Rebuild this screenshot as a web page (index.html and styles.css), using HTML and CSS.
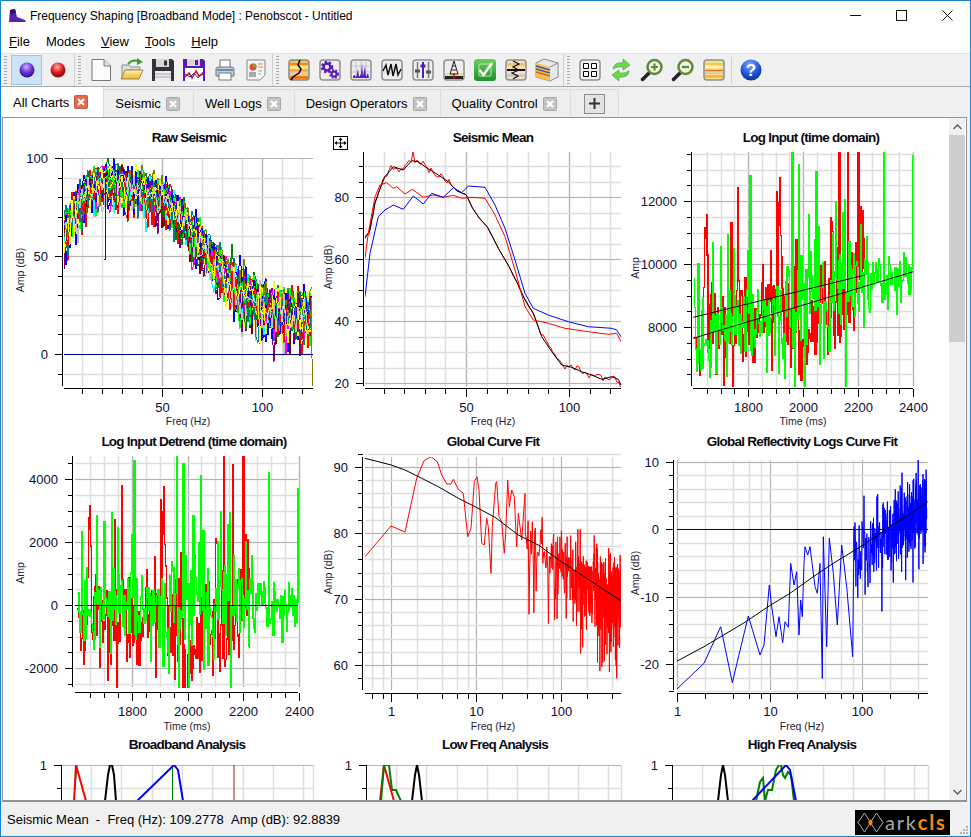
FILE: index.html
```html
<!DOCTYPE html>
<html lang="en">
<head>
  <meta charset="UTF-8">
  <title>Frequency Shaping [Broadband Mode] : Penobscot - Untitled</title>
  <link rel="stylesheet" href="styles.css">
</head>
<body>
<div class="window">
  <!--caption-->
  <div class="caption">
    <svg class="app-icon" width="17" height="13" viewBox="0 0 17 13"><polygon points="0,13 1,1 6,0 8,8 16,11 17,13" fill="#5a1fb0"/><polygon points="1,1 6,0 7,4 1,5" fill="#2a1060"/></svg>
    <span class="caption-text">Frequency Shaping [Broadband Mode] : Penobscot - Untitled</span>
    <div class="caption-btns">
      <div class="caption-btn"><svg width="11" height="11" viewBox="0 0 11 11"><path d="M0 5.5H11" stroke="#111"/></svg></div>
      <div class="caption-btn"><svg width="11" height="11" viewBox="0 0 11 11"><rect x=".5" y=".5" width="10" height="10" fill="none" stroke="#111"/></svg></div>
      <div class="caption-btn"><svg width="11" height="11" viewBox="0 0 11 11"><path d="M.5 .5L10.5 10.5M10.5 .5L.5 10.5" stroke="#111"/></svg></div>
    </div>
  </div>

  <!--menu-->
  <div class="menu">
    <span class="menu-item"><u>F</u>ile</span>
    <span class="menu-item">Modes</span>
    <span class="menu-item"><u>V</u>iew</span>
    <span class="menu-item"><u>T</u>ools</span>
    <span class="menu-item"><u>H</u>elp</span>
  </div>

  <!--toolbar-->
  <div class="toolbar">
    <div class="tool-group">
      <div class="grip"></div>
      <div class="tool active">
        <svg width="24" height="24" viewBox="0 0 24 24">
          <defs>
            <radialGradient id="ballPurple" cx=".45" cy=".3" r=".75"><stop offset="0" stop-color="#c9b4ff"/><stop offset=".5" stop-color="#6b35d8"/><stop offset="1" stop-color="#230a6a"/></radialGradient>
            <radialGradient id="ballRed" cx=".45" cy=".3" r=".75"><stop offset="0" stop-color="#ffb0b0"/><stop offset=".5" stop-color="#e01c1c"/><stop offset="1" stop-color="#6d0808"/></radialGradient>
            <radialGradient id="ballBlue" cx=".45" cy=".25" r=".8"><stop offset="0" stop-color="#7fa8ff"/><stop offset=".6" stop-color="#1f50d8"/><stop offset="1" stop-color="#0a2a90"/></radialGradient>
            <linearGradient id="checkGreen" x1="0" y1="0" x2="0" y2="1"><stop offset="0" stop-color="#6fcf5f"/><stop offset="1" stop-color="#1f8f2f"/></linearGradient>
            <linearGradient id="folderYellow" x1="0" y1="0" x2="0" y2="1"><stop offset="0" stop-color="#fff0b0"/><stop offset="1" stop-color="#e8b840"/></linearGradient>
          </defs>
          <circle cx="12" cy="12" r="7.5" fill="url(#ballPurple)"/>
        </svg>
      </div>
      <div class="tool"><svg width="24" height="24" viewBox="0 0 24 24"><circle cx="12" cy="12" r="7.5" fill="url(#ballRed)"/></svg></div>
    </div>

    <div class="tool-group">
      <div class="grip"></div>
      <div class="tool"><svg width="24" height="24" viewBox="0 0 24 24"><path d="M3 1.5H15L21.500 8V22.500H3Z" fill="#fcfcfc" stroke="#777"/><path d="M15 1.500V8H21.500" fill="#e4e4e4" stroke="#777"/></svg></div>
      <div class="tool"><svg width="24" height="24" viewBox="0 0 24 24"><path d="M2 21V7H9L11 9H20V12H6Z" fill="#d8dfe4" stroke="#8a8f90"/><path d="M1 21L5 12H23L19 21Z" fill="url(#folderYellow)" stroke="#a88a30"/><path d="M8 6Q12 1 18 3" fill="none" stroke="#3f9a2f" stroke-width="2"/><path d="M17 0L23 4L17 7Z" fill="#3f9a2f"/></svg></div>
      <div class="tool"><svg width="24" height="24" viewBox="0 0 24 24"><path d="M1 1H21L23 3V23H1Z" fill="#30343a"/><rect x="5" y="1" width="13" height="8" fill="#d8d8d8"/><rect x="13" y="2.500" width="3" height="5" fill="#30343a"/><rect x="4" y="13" width="16" height="10" fill="#ededed"/><path d="M4 16H20M4 19H20" stroke="#aaa"/></svg></div>
      <div class="tool"><svg width="24" height="24" viewBox="0 0 24 24"><path d="M1 1H21L23 3V23H1Z" fill="#5a18b8"/><rect x="5" y="1" width="13" height="7" fill="#d8d8d8"/><rect x="13" y="2" width="3" height="5" fill="#5a18b8"/><rect x="3" y="10" width="18" height="13" fill="#fff"/><path d="M3 19L7 15L10 20L14 13L17 18L21 16" fill="none" stroke="#e01010" stroke-width="1.500"/><path d="M3 16L8 19L12 15L16 20L21 14" fill="none" stroke="#1030c0"/></svg></div>
      <div class="tool"><svg width="24" height="24" viewBox="0 0 24 24"><rect x="7" y="2" width="10" height="8" fill="#fff" stroke="#777"/><path d="M3 11Q3 9 6 9H18Q21 9 21 11V18H3Z" fill="#c8ccd0" stroke="#6a7480"/><rect x="6" y="15" width="12" height="7" fill="#fff" stroke="#777"/><path d="M4 12H20" stroke="#3a80c0" stroke-width="1.500"/></svg></div>
      <div class="tool"><svg width="24" height="24" viewBox="0 0 24 24"><path d="M3 2H21V17L16 22H3Z" fill="#f4f4f0" stroke="#8a8a8a"/><circle cx="9" cy="9" r="3.500" fill="#e05030"/><path d="M9 9V5.500A3.500 3.500 0 0 1 12.500 9Z" fill="#60b040"/><path d="M14 6H19M14 9H19" stroke="#e08070"/><rect x="5" y="14" width="7" height="5" fill="#a8a8a8"/><path d="M14 13H18M14 16H17" stroke="#aaa"/></svg></div>
    </div>

    <div class="tool-group">
      <div class="grip"></div>
      <div class="tool"><svg width="24" height="24" viewBox="0 0 24 24"><rect x="2" y="2" width="20" height="20" rx="3" fill="#f7c65a" stroke="#8a8a8a" stroke-width="1.500"/><path d="M3 6H21" stroke="#f08a10" stroke-width="2"/><path d="M3 9.500H21" stroke="#fff0b0" stroke-width="2"/><path d="M3 12.500H21" stroke="#f8a840" stroke-width="2"/><path d="M3 15.500H21" stroke="#cfcfcf" stroke-width="2"/><path d="M3 19.500H21" stroke="#f06a10" stroke-width="2.500"/><path d="M13 2L11 7L14 11L12 15L6 19L4 22" fill="none" stroke="#000" stroke-width="1.500"/></svg></div>
      <div class="tool"><svg width="24" height="24" viewBox="0 0 24 24"><rect x="2" y="2" width="20" height="20" rx="3" fill="#eeeeee" stroke="#8f8f8f" stroke-width="1.500"/><circle cx="9" cy="9" r="3.400" fill="none" stroke="#5a18b8" stroke-width="2.500"/><circle cx="9" cy="9" r="5.200" fill="none" stroke="#5a18b8" stroke-width="2" stroke-dasharray="2.400 1.900"/><circle cx="16" cy="16" r="2.500" fill="none" stroke="#5a18b8" stroke-width="2"/><circle cx="16" cy="16" r="4" fill="none" stroke="#5a18b8" stroke-width="1.800" stroke-dasharray="1.800 1.500"/></svg></div>
      <div class="tool"><svg width="24" height="24" viewBox="0 0 24 24"><rect x="2" y="2" width="20" height="20" rx="3" fill="#eeeeee" stroke="#8f8f8f" stroke-width="1.500"/><path d="M7 3V21M12 3V21M17 3V21M3 8H21M3 14H21" stroke="#c4c4d4"/><path d="M4 20V18L6 17L7 20L9 11L10 19L12 16L13 5L14 18L16 8L17 19L19 15L20 20Z" fill="#5a18b8"/></svg></div>
      <div class="tool"><svg width="24" height="24" viewBox="0 0 24 24"><rect x="2" y="2" width="20" height="20" rx="3" fill="#eeeeee" stroke="#8f8f8f" stroke-width="1.500"/><path d="M3 13L6 7L8 17L11 6L13 18L16 6L18 17L21 11" fill="none" stroke="#111" stroke-width="1.500"/></svg></div>
      <div class="tool"><svg width="24" height="24" viewBox="0 0 24 24"><rect x="2" y="2" width="20" height="20" rx="3" fill="#eeeeee" stroke="#8f8f8f" stroke-width="1.500"/><path d="M6.500 4V20M17.500 4V20" stroke="#777" stroke-width="1.500"/><path d="M12 4V20" stroke="#5a18b8" stroke-width="2"/><path d="M4 13H9M15 14H20" stroke="#555" stroke-width="3"/><path d="M9.500 8H14.500" stroke="#5a18b8" stroke-width="3"/></svg></div>
      <div class="tool"><svg width="24" height="24" viewBox="0 0 24 24"><rect x="2" y="2" width="20" height="20" rx="3" fill="#eeeeee" stroke="#8f8f8f" stroke-width="1.500"/><rect x="3" y="15" width="18" height="3" fill="#f2dc90"/><rect x="3" y="18" width="18" height="3" fill="#222"/><path d="M12 3L8 16H16ZM9.500 12H14.500M10.500 8H13.500" fill="none" stroke="#222"/><path d="M12 15V21" stroke="#e01010" stroke-width="1.500"/></svg></div>
      <div class="tool"><svg width="24" height="24" viewBox="0 0 24 24"><rect x="1" y="1" width="22" height="22" rx="3" fill="url(#checkGreen)"/><rect x="6" y="6" width="12" height="12" rx="1" fill="none" stroke="#b8e8b0"/><path d="M6.500 12L10.500 17L19 5" fill="none" stroke="#fff" stroke-width="2.500"/></svg></div>
      <div class="tool"><svg width="24" height="24" viewBox="0 0 24 24"><rect x="2" y="2" width="20" height="20" rx="3" fill="#f6e2b8" stroke="#8f8f8f" stroke-width="1.500"/><rect x="3" y="5" width="18" height="3" fill="#f8c070"/><rect x="3" y="16" width="18" height="3" fill="#c8c8d8"/><path d="M3 12H21" stroke="#111" stroke-width="2"/><path d="M9 3L15 6L9 9L15 12L8 15L14 18L9 21" fill="none" stroke="#111" stroke-width="1.200"/></svg></div>
      <div class="tool"><svg width="24" height="24" viewBox="0 0 24 24"><path d="M1 5L9 1L23 5V19L15 23L1 19Z" fill="#e8e8e8" stroke="#888"/><path d="M1 5L15 9V23L1 19Z" fill="#f8c050"/><path d="M1 8L15 12M1 11L15 15" stroke="#4060a0" stroke-width="1.500"/><path d="M1 14L15 18" stroke="#e06010" stroke-width="1.500"/><path d="M15 9L23 5" stroke="#888"/></svg></div>
    </div>

    <div class="tool-group last">
      <div class="grip"></div>
      <div class="tool"><svg width="24" height="24" viewBox="0 0 24 24"><rect x="2" y="2" width="20" height="20" rx="3" fill="#f4f4f4" stroke="#8f8f8f" stroke-width="1.500"/><path d="M5.500 5.500H10.500V10.500H5.500ZM13.500 5.500H18.500V10.500H13.500ZM5.500 13.500H10.500V18.500H5.500ZM13.500 13.500H18.500V18.500H13.500Z" fill="#fff" stroke="#000"/></svg></div>
      <div class="tool"><svg width="24" height="24" viewBox="0 0 24 24"><path d="M4 11Q5 4 14 5V1L21 7L14 12V9Q8 8 4 11Z" fill="#6ed84a" stroke="#3aa830" stroke-width=".7"/><path d="M20 13Q19 20 10 19V23L3 17L10 12V15Q16 16 20 13Z" fill="#6ed84a" stroke="#3aa830" stroke-width=".7"/></svg></div>
      <div class="tool"><svg width="24" height="24" viewBox="0 0 24 24"><path d="M9 15L2.500 21.500" stroke="#222" stroke-width="3.500" stroke-linecap="round"/><circle cx="14.500" cy="9" r="7" fill="#f0f4e4" stroke="#5f8a3a" stroke-width="2.500"/><path d="M11 9H18M14.500 5.500V12.500" stroke="#5f8a3a" stroke-width="2.200"/></svg></div>
      <div class="tool"><svg width="24" height="24" viewBox="0 0 24 24"><path d="M9 15L2.500 21.500" stroke="#222" stroke-width="3.500" stroke-linecap="round"/><circle cx="14.500" cy="9" r="7" fill="#f0f4e4" stroke="#5f8a3a" stroke-width="2.500"/><path d="M11 9H18" stroke="#5f8a3a" stroke-width="2.200"/></svg></div>
      <div class="tool"><svg width="24" height="24" viewBox="0 0 24 24"><rect x="2" y="2" width="20" height="20" rx="3" fill="#fbe08a" stroke="#8f8f8f" stroke-width="1.500"/><path d="M3 6H21" stroke="#f8c848" stroke-width="2"/><path d="M3 9H21" stroke="#fff4c8" stroke-width="2"/><path d="M3 12.500H21" stroke="#f07010" stroke-width="1.500"/><path d="M3 15H21" stroke="#c8c8c8" stroke-width="1.500"/><path d="M3 18.500H21" stroke="#f8b030" stroke-width="2.500"/></svg></div>
      <div class="tool-sep"></div>
      <div class="tool"><svg width="24" height="24" viewBox="0 0 24 24"><circle cx="12" cy="12" r="10.500" fill="url(#ballBlue)"/><text class="help-mark" x="12" y="18" text-anchor="middle">?</text></svg></div>
    </div>
  </div>

  <!--tabs-->
  <div class="tabs">
    <div class="tab current">All Charts <svg class="tab-close" width="14" height="14" viewBox="0 0 14 14"><rect x=".5" y=".5" width="13" height="13" rx="1" fill="#e8694a" stroke="#c8583a"/><path d="M4 4L10 10M10 4L4 10" stroke="#fff" stroke-width="2"/></svg></div>
    <div class="tab">Seismic <svg class="tab-close" width="14" height="14" viewBox="0 0 14 14"><rect x=".5" y=".5" width="13" height="13" rx="1" fill="#c4c4c4" stroke="#a8a8a8"/><path d="M4 4L10 10M10 4L4 10" stroke="#fff" stroke-width="2"/></svg></div>
    <div class="tab">Well Logs <svg class="tab-close" width="14" height="14" viewBox="0 0 14 14"><rect x=".5" y=".5" width="13" height="13" rx="1" fill="#c4c4c4" stroke="#a8a8a8"/><path d="M4 4L10 10M10 4L4 10" stroke="#fff" stroke-width="2"/></svg></div>
    <div class="tab">Design Operators <svg class="tab-close" width="14" height="14" viewBox="0 0 14 14"><rect x=".5" y=".5" width="13" height="13" rx="1" fill="#c4c4c4" stroke="#a8a8a8"/><path d="M4 4L10 10M10 4L4 10" stroke="#fff" stroke-width="2"/></svg></div>
    <div class="tab">Quality Control <svg class="tab-close" width="14" height="14" viewBox="0 0 14 14"><rect x=".5" y=".5" width="13" height="13" rx="1" fill="#c4c4c4" stroke="#a8a8a8"/><path d="M4 4L10 10M10 4L4 10" stroke="#fff" stroke-width="2"/></svg></div>
    <div class="tab add-tab"><div class="add-btn"><svg width="11" height="11" viewBox="0 0 11 11"><path d="M5.500 0V11M0 5.500H11" stroke="#333" stroke-width="2"/></svg></div></div>
  </div>

  <!--charts-->
  <div class="panel">
    <div class="charts" id="charts"></div>
    <div class="scrollbar">
      <div class="scroll-btn"><svg width="9" height="6" viewBox="0 0 9 6"><path d="M.5 5L4.500 1L8.500 5" fill="none" stroke="#606060" stroke-width="1.500"/></svg></div>
      <div class="scroll-thumb"></div>
      <div class="scroll-track"></div>
      <div class="scroll-btn"><svg width="9" height="6" viewBox="0 0 9 6"><path d="M.5 1L4.500 5L8.500 1" fill="none" stroke="#606060" stroke-width="1.500"/></svg></div>
    </div>
  </div>

  <!--status bar-->
  <div class="status">
    <span class="status-text">Seismic Mean &nbsp;-&nbsp; Freq (Hz): 109.2778 &nbsp;Amp (dB): 92.8839</span>
    <div class="logo">
      <svg width="27" height="21" viewBox="0 0 27 21"><path d="M1 10.500L7.500 1L13.500 10.500L7.500 20ZM13.500 10.500L19.500 1L26 10.500L19.500 20Z" fill="none" stroke="#b0b0b0"/><path d="M13.500 7L16 10.500L13.500 14L11 10.500Z" fill="#f58a0a"/></svg>
      <span class="logo-text">ark<b>cls</b></span>
    </div>
    <svg class="size-grip" width="10" height="10" viewBox="0 0 10 10"><path d="M7 1h2v2h-2zM4 4h2v2h-2zM7 4h2v2h-2zM1 7h2v2h-2zM4 7h2v2h-2zM7 7h2v2h-2z" fill="#b4b4b4"/></svg>
  </div>
</div>
<script src="charts.js"></script>
</body>
</html>
```

FILE: styles.css
```css
* {
  margin: 0;
  padding: 0;
  box-sizing: border-box;
}

body {
  font-family: "Liberation Sans", Arial, sans-serif;
  color: #000;
  background-color: #f0f0f0;
}

.window {
  width: 971px;
  height: 837px;
  display: flex;
  flex-direction: column;
  border: 1px solid #1a80d0;
  overflow: hidden;
}

/*标题栏*/
.caption {
  height: 29px;
  flex: none;
  display: flex;
  align-items: center;
  background-color: #fff;
}

.app-icon {
  margin-left: 8px;
  margin-right: 4px;
}

.caption-text {
  font-size: 12px;
  letter-spacing: -0.03px;
  flex: 1;
}

.caption-btns {
  display: flex;
}

.caption-btn {
  width: 46px;
  height: 29px;
  display: flex;
  align-items: center;
  justify-content: center;
}

/*菜单*/
.menu {
  height: 23px;
  flex: none;
  display: flex;
  align-items: center;
  gap: 16px;
  padding-left: 8px;
  font-size: 13px;
  background-color: #fff;
}

/*工具栏*/
.toolbar {
  height: 34px;
  flex: none;
  display: flex;
  align-items: center;
  background-color: #f0f0f0;
  border-top: 1px solid #e3e3e3;
  border-bottom: 1px solid #a8a8a8;
}

.tool-group {
  height: 32px;
  display: flex;
  align-items: center;
  padding: 0 1px 0 3px;
  border-right: 1px solid #d0d0d0;
}

.tool-group.last {
  border-right: 0;
}

.grip {
  width: 3px;
  height: 28px;
  margin-right: 4px;
  background: repeating-linear-gradient(to bottom, #a8a8a8 0, #a8a8a8 1px, transparent 1px, transparent 3px);
}

.tool {
  width: 31px;
  height: 30px;
  display: flex;
  align-items: center;
  justify-content: center;
  border: 1px solid transparent;
}

.tool.active {
  background-color: #cce4f7;
  border-color: #99c8ec;
}

.tool-sep {
  width: 1px;
  height: 26px;
  margin: 0 3px 0 2px;
  background-color: #d0d0d0;
}

.help-mark {
  font-size: 17px;
  font-weight: bold;
  fill: #fff;
}

/*标签页*/
.tabs {
  height: 30px;
  flex: none;
  display: flex;
  align-items: flex-end;
  background-color: #f0f0f0;
  font-size: 13px;
}

.tab {
  height: 28px;
  display: flex;
  align-items: center;
  gap: 5px;
  padding: 0 13px 0 11px;
  background-color: #eeeeee;
  border-top: 1px solid #dcdcdc;
  border-right: 1px solid #dcdcdc;
  white-space: nowrap;
}

.tab.current {
  height: 30px;
  padding: 0 15px 0 12px;
  background-color: #fff;
  border-top: 0;
}

.add-tab {
  width: 48px;
  justify-content: center;
  padding: 0;
}

.add-btn {
  width: 21px;
  height: 20px;
  display: flex;
  align-items: center;
  justify-content: center;
  background-color: #e4e4e4;
  border: 1px solid #8c8c8c;
}

/*图表区域*/
.panel {
  height: 685px;
  flex: none;
  display: flex;
  margin: 0 3px 0 1px;
  background-color: #fff;
  border: 1px solid #8e9498;
  border-width: 1px 1px 2px 1px;
}

.charts {
  flex: 1;
  padding: 6px 0 0 5px;
  display: grid;
  grid-template-columns: 314px 308px 319px;
  grid-template-rows: 304px 303px 70px;
  overflow: hidden;
}

.chart {
  display: block;
  overflow: visible;
}

.chart .grid-minor {
  stroke: #dedede;
  stroke-width: 1.500px;
}

.chart .grid-major {
  stroke: #b4b4b4;
  stroke-width: 1.200px;
}

.chart .axis {
  stroke: #000;
  shape-rendering: crispEdges;
}

.chart .series {
  fill: none;
}

.chart .aliased {
  shape-rendering: crispEdges;
}

.chart-title {
  font-size: 13.500px;
  font-weight: bold;
  letter-spacing: -0.75px;
  text-anchor: middle;
  fill: #0a0a14;
}

.tick-label {
  font-size: 13px;
  fill: #0c0c34;
}

.axis-title {
  font-size: 10.500px;
  text-anchor: middle;
  fill: #1c1c34;
}

/*滚动条*/
.scrollbar {
  width: 16px;
  flex: none;
  margin-right: 1px;
  display: flex;
  flex-direction: column;
  background-color: #f0f0f0;
}

.scroll-btn {
  height: 17px;
  flex: none;
  display: flex;
  align-items: center;
  justify-content: center;
}

.scroll-thumb {
  height: 207px;
  flex: none;
  background-color: #cdcdcd;
}

.scroll-track {
  flex: 1;
}

/*状态栏*/
.status {
  flex: 1;
  min-height: 0;
  position: relative;
  display: flex;
  align-items: center;
  justify-content: space-between;
  padding: 0 20px 0 6px;
  font-size: 13px;
  background-color: #f0f0f0;
}

.logo {
  width: 95px;
  height: 25px;
  margin-top: 6px;
  display: flex;
  align-items: center;
  gap: 1px;
  padding-left: 2px;
  background-color: #000;
}

.logo-text {
  font-family: Lato, sans-serif;
  font-size: 20px;
  letter-spacing: 1.800px;
  color: #a8a8a8;
}

.logo-text b {
  font-weight: bold;
  color: #f58a0a;
}

.size-grip {
  position: absolute;
  right: 1px;
  bottom: 1px;
}
```

FILE: charts.js
```js
// 可重复的随机数
var seed = 20231;
function rand() {
  seed = (seed + 0x6D2B79F5) | 0;
  var t = Math.imul(seed ^ (seed >>> 15), 1 | seed);
  t = (t + Math.imul(t ^ (t >>> 7), 61 | t)) ^ t;
  return ((t ^ (t >>> 14)) >>> 0) / 4294967296;
}

function gauss() {
  return (rand() + rand() + rand() + rand() - 2) * 1.7;
}

function linear(v0, p0, k) {
  return function (v) {
    return p0 + (v - v0) * k;
  };
}

function logScale(p1, k) {
  return function (v) {
    return p1 + Math.log10(v) * k;
  };
}

function range(from, to, step) {
  var out = [];
  for (var v = from; v <= to + 1e-6; v += step) {
    out.push(Math.round(v * 100) / 100);
  }
  return out;
}

// 折线插值
function interp(pts, x) {
  if (x <= pts[0][0]) return pts[0][1];
  for (var i = 1; i < pts.length; i++) {
    if (x <= pts[i][0]) {
      var a = pts[i - 1], b = pts[i];
      return a[1] + (b[1] - a[1]) * (x - a[0]) / (b[0] - a[0]);
    }
  }
  return pts[pts.length - 1][1];
}

// 从截图放大3倍后量出来的点
function traced(ox, oy, pts) {
  return pts.map(function (p) {
    return [ox + p[0] / 3, oy + p[1] / 3];
  });
}

// 阶梯线, 数据点之间走直角
function stepped(pts) {
  var out = [];
  pts.forEach(function (p, i) {
    if (i > 0) out.push([p[0], pts[i - 1][1]]);
    out.push(p);
  });
  return out;
}

function line(x1, y1, x2, y2, cls) {
  return '<line x1="' + x1 + '" y1="' + y1 + '" x2="' + x2 + '" y2="' + y2 + '" class="' + cls + '"/>';
}

function label(text, x, y, cls, extra) {
  return '<text x="' + x + '" y="' + y + '" class="' + cls + '" ' + (extra || '') + '>' + text + '</text>';
}

function polyline(s) {
  var pts = s.points.map(function (p) {
    return p[0].toFixed(1) + ',' + p[1].toFixed(1);
  }).join(' ');
  return '<polyline class="series' + (s.aliased ? ' aliased' : '') + '" points="' + pts + '" stroke="' + s.color + '" stroke-width="' + (s.width || 1) + '"/>';
}

function px(v) {
  return Math.round(v) + 0.5;
}

function drawChart(c) {
  var p = c.plot, html = '';
  var w = c.size[0], h = c.size[1];
  html += '<svg class="chart" width="' + w + '" height="' + h + '" viewBox="' + c.origin[0] + ' ' + c.origin[1] + ' ' + w + ' ' + h + '">';

  // 网格
  c.x.minor.concat(c.x.major).forEach(function (v, i) {
    var x = px(c.x.scale(v));
    var major = i >= c.x.minor.length;
    html += line(x, p.t, x, p.b, major ? 'grid-major' : 'grid-minor');
  });
  c.y.minor.concat(c.y.major).forEach(function (v, i) {
    var y = px(c.y.scale(v));
    var major = i >= c.y.minor.length;
    html += line(p.l, y, p.r, y, major ? 'grid-major' : 'grid-minor');
  });

  // 曲线 (裁剪到绘图区)
  html += '<svg x="' + p.l + '" y="' + p.t + '" width="' + (p.r - p.l + 1) + '" height="' + (p.b - p.t + 1) + '" viewBox="' + p.l + ' ' + p.t + ' ' + (p.r - p.l + 1) + ' ' + (p.b - p.t + 1) + '">';
  c.series.forEach(function (s) {
    html += polyline(s);
  });
  html += '</svg>';

  // 坐标轴
  var ax = c.yAxisAt + 0.5, ay = c.xAxisAt + 0.5;
  html += line(ax, p.t, ax, p.b, 'axis');
  c.y.minor.forEach(function (v) {
    var y = px(c.y.scale(v));
    html += line(ax - 5, y, ax, y, 'axis');
  });
  c.y.major.forEach(function (v) {
    var y = px(c.y.scale(v));
    html += line(ax - 8, y, ax, y, 'axis');
    html += label(v, c.yAxisAt - 14, y + 4.5, 'tick-label', 'text-anchor="end"');
  });

  if (c.xTitle) {
    html += line(p.l, ay, p.r, ay, 'axis');
    c.x.minor.forEach(function (v) {
      var x = px(c.x.scale(v));
      html += line(x, ay, x, ay + 5, 'axis');
    });
    c.x.major.forEach(function (v) {
      var x = px(c.x.scale(v));
      html += line(x, ay, x, ay + 8, 'axis');
      html += label(v, x, c.xLabelY, 'tick-label', 'text-anchor="middle"');
    });
    html += label(c.xTitle, c.xTitleAt[0], c.xTitleAt[1], 'axis-title');
    var t = c.yTitleAt;
    html += label(c.yTitle, t[0], t[1], 'axis-title', 'transform="rotate(-90 ' + t[0] + ' ' + t[1] + ')"');
  }

  html += label(c.title, c.titleAt[0], c.titleAt[1], 'chart-title');
  html += c.overlay || '';
  html += '</svg>';
  return html;
}

/* ---------- Raw Seismic ---------- */
var rawX = linear(50, 162, 2);
var rawY = linear(0, 354, -1.96);
var rawMean = [[1, 64], [5, 74], [10, 81], [15, 87], [20, 89], [25, 90], [30, 89], [40, 86], [50, 82], [60, 72], [70, 58], [75, 51], [80, 44], [90, 33], [100, 26], [110, 24], [125, 21]];
var rawColors = ['#ff0000', '#00ff00', '#0000ff', '#00ffff', '#ff00ff', '#ffff00', '#800000', '#00ff00', '#008000', '#0000ff', '#808000', '#800080', '#ff0000', '#008080', '#ffff00', '#c0c0c0'];
var rawSeries = [];
for (var t = 0; t < 48; t++) {
  var pts = [], shift = gauss() * 2.2;
  for (var hz = 1; hz <= 125.5; hz += 1) {
    var spread = hz < 85 ? 3.4 : 5;
    var v = interp(rawMean, hz) + shift + gauss() * spread - Math.pow(rand(), 7) * 16;
    pts.push([rawX(hz), rawY(Math.min(v, 100))]);
  }
  rawSeries.push({points: pts, color: rawColors[t % rawColors.length], aliased: true});
}
// 20Hz处的尖刺, 最右端的下冲
rawSeries.push({points: [[105, 178], [105, 260], [106, 180]], color: '#800000', aliased: true});
rawSeries.push({points: [[311, 300], [312.500, 386]], color: '#808000', aliased: true});
rawSeries.push({points: [[64, 354], [313, 354]], color: '#000080', aliased: true});

/* ---------- Seismic Mean ---------- */
var meanBlack = traced(325, 120, [[120, 355], [135, 330], [150, 250], [165, 205], [180, 170], [205, 140], [235, 150], [260, 122], [280, 125], [300, 140], [340, 165], [370, 185], [395, 212], [424, 225], [440, 260], [460, 290], [490, 325], [520, 385], [550, 435], [575, 485], [600, 540], [625, 580], [650, 650], [680, 695], [710, 735], [740, 742], [770, 755], [800, 765], [830, 778], [860, 770], [880, 778], [888, 795]]);
var meanRed = traced(325, 120, [[120, 415], [130, 340], [150, 230], [165, 195], [185, 188], [205, 205], [215, 200], [240, 222], [262, 208], [295, 232], [325, 225], [355, 232], [385, 226], [410, 235], [440, 232], [480, 235], [510, 285], [540, 350], [570, 450], [600, 560], [625, 600], [670, 610], [720, 625], [790, 635], [850, 643], [875, 640], [888, 665]]);
var meanBlue = traced(325, 120, [[120, 530], [135, 400], [160, 290], [180, 270], [205, 255], [235, 268], [265, 228], [295, 252], [320, 220], [355, 232], [385, 203], [410, 218], [430, 198], [480, 202], [510, 255], [540, 325], [570, 420], [600, 520], [625, 565], [670, 585], [730, 605], [790, 620], [860, 625], [875, 630], [888, 650]]);
var meanNoisy = [];
for (var mx = 365; mx <= 621; mx += 2) {
  var jitter = (mx < 450 || mx > 540) ? 4 : 1;
  var my = interp(meanBlack, mx) + (rand() - 0.5) * jitter * 2;
  if (mx === 413) my = 152;
  meanNoisy.push([mx, my]);
}
var moveIcon = '<rect x="333.500" y="136.500" width="14" height="13" fill="#fff" stroke="#000"/>' +
  '<path d="M340.500 138V148M335 143H346" stroke="#000" fill="none"/>' +
  '<path d="M340.500 137.500L338.500 140H342.500ZM340.500 148.500L338.500 146H342.500ZM334.500 143L337 141V145ZM346.500 143L344 141V145Z" fill="#000"/>';

/* ---------- Log Input / Detrend ---------- */
function bump(t, center, width, height) {
  var d = (t - center) / width;
  return height * Math.exp(-d * d);
}

var redLog = [], greenLog = [];
function lowerTrend(t) {
  return 7650 + (t - 1600) * 2.625;
}
function upperTrend(t) {
  return 8300 + (t - 1600) * 2.16;
}
for (var ms = 1603; ms <= 2400; ms += 3) {
  // 中段振幅大, 2230以后变小
  var env = 0.8 + bump(ms, 2030, 90, 0.7) - (ms > 2230 ? 0.25 : 0);
  var spike = rand() < 0.14 ? gauss() * 1500 : 0;
  greenLog.push([ms, lowerTrend(ms) + (gauss() * 780 + spike) * env + (rand() < 0.045 ? 2200 + rand() * 2200 : 0)]);
  if (ms <= 2225) {
    var hot = bump(ms, 1645, 7, 3400) + bump(ms, 1912, 16, 2600) + bump(ms, 2212, 10, 2000) - bump(ms, 2020, 14, 1500) - bump(ms, 1985, 10, 800);
    redLog.push([ms, upperTrend(ms) - 600 + gauss() * 950 + hot + (rand() < 0.07 ? 2000 + rand() * 2400 : 0)]);
  }
}

var logX = linear(1800, 748, 0.275), logY = linear(8000, 327, -0.0315);
function logPoints(data) {
  return stepped(data.map(function (d) {
    return [logX(d[0]), logY(d[1])];
  }));
}

var trendX = linear(1800, 132, 0.2775), trendY = linear(0, 605, -0.0315);
function detrendPoints(data, trend) {
  return stepped(data.map(function (d) {
    var fade = d[0] < 1615 ? (d[0] - 1600) / 15 : 1;
    return [trendX(d[0]), trendY((d[1] - trend(d[0])) * fade)];
  }));
}

/* ---------- 频谱曲线拟合 ---------- */
function noisySpectrum(start, end, fit, scale, up, down) {
  // 频率线性采样, 在对数轴上越往右越密
  var out = [];
  for (var f = start; f <= end; f += 1) {
    var x = scale(f);
    var spread = 0.8 + Math.min(f / 150, 1) * 0.5;
    var y = interp(fit, x) + gauss() * up * spread;
    if (rand() < 0.22) y += rand() * down;
    out.push([x, y]);
  }
  return out;
}

var curveX = logScale(391, 85);
var curveFit = traced(325, 430, [[120, 85], [199, 105], [240, 120], [290, 145], [340, 170], [400, 205], [454, 232], [510, 262], [580, 315], [640, 345], [709, 395], [770, 435], [830, 475], [888, 512]]);
var curveLow = traced(325, 430, [[120, 380], [198, 288], [240, 306], [262, 205], [275, 145], [297, 92], [318, 80], [337, 95], [350, 135], [365, 162], [378, 162], [385, 148], [400, 178], [415, 190], [420, 240], [428, 320], [438, 295], [448, 155], [456, 140], [462, 180], [470, 340], [478, 345], [485, 265], [490, 290], [498, 430], [502, 290], [512, 160], [515, 155], [522, 260], [530, 275], [538, 370], [542, 310], [548, 150], [553, 230], [560, 180], [568, 200], [575, 350], [580, 250], [590, 330], [600, 190]]);
var curveRed = curveLow.concat(noisySpectrum(38, 500, curveFit, curveX, 15, 60));

var reflX = logScale(677, 92.5);
var reflFit = traced(630, 430, [[140, 694], [222, 650], [340, 580], [422, 525], [480, 490], [550, 440], [610, 400], [700, 345], [780, 290], [850, 245], [893, 215]]);
var reflLow = traced(630, 430, [[140, 778], [222, 700], [272, 590], [307, 758], [355, 558], [390, 675], [402, 645], [418, 465], [425, 530], [438, 620], [447, 560], [458, 638], [465, 575], [475, 592], [482, 400], [492, 465], [500, 425], [507, 615], [512, 510], [517, 560], [522, 400], [525, 350], [533, 375], [540, 350], [555, 470], [562, 490], [570, 400], [577, 745], [580, 320], [590, 650], [598, 325], [610, 430], [622, 585], [635, 345], [650, 470], [668, 680], [672, 290]]);
var reflBlue = reflLow.concat(noisySpectrum(82, 500, reflFit, reflX, 15, 36));

var logTicks = [0.6, 0.8, 2, 4, 6, 8, 20, 40, 60, 80, 200, 400];

var charts = [
  {
    title: 'Raw Seismic', titleAt: [189, 142], origin: [8, 124], size: [314, 304],
    plot: {l: 64, r: 313, t: 158, b: 386}, yAxisAt: 62, xAxisAt: 388,
    x: {scale: rawX, major: [50, 100], minor: range(10, 120, 10)},
    y: {scale: rawY, major: [0, 50, 100], minor: range(-10, 90, 10)},
    xLabelY: 412, xTitle: 'Freq (Hz)', xTitleAt: [188, 425], yTitle: 'Amp (dB)', yTitleAt: [24, 270],
    series: rawSeries
  },
  {
    title: 'Seismic Mean', titleAt: [493, 142], origin: [322, 124], size: [308, 304],
    plot: {l: 365, r: 621, t: 152, b: 386}, yAxisAt: 363, xAxisAt: 388,
    x: {scale: linear(50, 466, 2.06), major: [50, 100], minor: range(10, 120, 10)},
    y: {scale: linear(80, 197, -3.1), major: [20, 40, 60, 80], minor: range(20, 90, 5)},
    xLabelY: 412, xTitle: 'Freq (Hz)', xTitleAt: [493, 425], yTitle: 'Amp (dB)', yTitleAt: [332, 267],
    overlay: moveIcon,
    series: [
      {points: meanNoisy, color: '#ff0000'},
      {points: meanBlack, color: '#000000'},
      {points: meanRed, color: '#ff0000'},
      {points: meanBlue, color: '#0000ff'}
    ]
  },
  {
    title: 'Log Input (time domain)', titleAt: [811, 142], origin: [630, 124], size: [319, 304],
    plot: {l: 693, r: 913, t: 152, b: 386}, yAxisAt: 691, xAxisAt: 388,
    x: {scale: logX, major: [1800, 2000, 2200, 2400], minor: range(1650, 2400, 50)},
    y: {scale: logY, major: [8000, 10000, 12000], minor: range(6500, 13500, 500)},
    xLabelY: 412, xTitle: 'Time (ms)', xTitleAt: [803, 425], yTitle: 'Amp', yTitleAt: [639, 268],
    series: [
      {points: logPoints(redLog), color: '#ff0000', aliased: true, width: 1.4},
      {points: logPoints(greenLog), color: '#00ff00', aliased: true, width: 1.4},
      {points: traced(630, 120, [[190, 655], [850, 455]]), color: '#000000'},
      {points: traced(630, 120, [[190, 592], [705, 465]]), color: '#000000'}
    ]
  },
  {
    title: 'Log Input Detrend (time domain)', titleAt: [194, 446], origin: [8, 428], size: [314, 303],
    plot: {l: 75, r: 298, t: 456, b: 687}, yAxisAt: 72, xAxisAt: 692,
    x: {scale: trendX, major: [1800, 2000, 2200, 2400], minor: range(1650, 2400, 50)},
    y: {scale: trendY, major: [-2000, 0, 2000, 4000], minor: range(-2500, 4500, 500)},
    xLabelY: 716, xTitle: 'Time (ms)', xTitleAt: [187, 730], yTitle: 'Amp', yTitleAt: [24, 573],
    series: [
      {points: detrendPoints(redLog, upperTrend), color: '#ff0000', aliased: true, width: 1.4},
      {points: detrendPoints(greenLog, lowerTrend), color: '#00ff00', aliased: true, width: 1.4},
      {points: [[75, 605], [298, 605]], color: '#000080', aliased: true}
    ]
  },
  {
    title: 'Global Curve Fit', titleAt: [493, 446], origin: [322, 428], size: [308, 303],
    plot: {l: 365, r: 621, t: 457, b: 690}, yAxisAt: 362, xAxisAt: 693,
    x: {scale: curveX, major: [1, 10, 100], minor: logTicks},
    y: {scale: linear(90, 467, -6.6), major: [60, 70, 80, 90], minor: range(58, 92, 2)},
    xLabelY: 716, xTitle: 'Freq (Hz)', xTitleAt: [493, 730], yTitle: 'Amp (dB)', yTitleAt: [332, 572],
    series: [
      {points: curveRed, color: '#ff0000'},
      {points: curveFit, color: '#000000'}
    ]
  },
  {
    title: 'Global Reflectivity Logs Curve Fit', titleAt: [802, 446], origin: [630, 428], size: [319, 303],
    plot: {l: 677, r: 928, t: 460, b: 690}, yAxisAt: 673, xAxisAt: 693,
    x: {scale: reflX, major: [1, 10, 100], minor: [2, 4, 6, 8, 20, 40, 60, 80, 200, 400]},
    y: {scale: linear(0, 529, -6.75), major: [-20, -10, 0, 10], minor: range(-24, 10, 2)},
    xLabelY: 716, xTitle: 'Freq (Hz)', xTitleAt: [802, 730], yTitle: 'Amp (dB)', yTitleAt: [639, 573],
    series: [
      {points: reflBlue, color: '#0000ff'},
      {points: [[676, 529], [928, 529]], color: '#000080', aliased: true},
      {points: reflFit, color: '#000000'}
    ]
  }
];

/* ---------- 第三行, 只露出上面一点 ---------- */
function analysisChart(title, titleX, originX, width, axisX, right, series) {
  var lines = [];
  for (var x = axisX + 30; x < right; x += 30.3) {
    lines.push(x);
  }
  lines.push(right);
  return {
    title: title, titleAt: [titleX, 749], origin: [originX, 731], size: [width, 70],
    plot: {l: axisX + 1, r: right, t: 765, b: 801}, yAxisAt: axisX, xAxisAt: 900,
    x: {scale: function (v) { return v; }, major: [], minor: lines},
    y: {scale: linear(1, 765, -46), major: [1], minor: [0.5]},
    series: series
  };
}

charts.push(analysisChart('Broadband Analysis', 187, 8, 314, 61, 313, [
  {points: [[234, 765], [234, 801]], color: '#a02020'},
  {points: [[172.500, 765], [172.500, 801]], color: '#008000'},
  {points: [[75, 790], [77, 765]], color: '#008000'},
  {points: [[74, 801], [76, 765], [86, 801]], color: '#ff0000', width: 2},
  {points: [[105, 801], [108, 775], [110, 765], [112, 765], [114, 775], [116, 801]], color: '#000000', width: 2},
  {points: [[137, 801], [174, 765], [178, 770], [183, 801]], color: '#0000ff', width: 2}
]));
charts.push(analysisChart('Low Freq Analysis', 495, 322, 308, 366, 621, [
  {points: [[380, 801], [384, 765], [394, 801]], color: '#ff0000', width: 2},
  {points: [[381, 801], [384, 765], [389, 765], [392, 790], [396, 790], [401, 801]], color: '#008000', width: 2},
  {points: [[412, 801], [415, 775], [417, 765], [419, 775], [422, 801]], color: '#000000', width: 2}
]));
charts.push(analysisChart('High Freq Analysis', 802, 630, 319, 672, 928, [
  {points: [[718, 801], [721, 775], [723, 765], [725, 775], [728, 801]], color: '#000000', width: 2},
  {points: [[756, 801], [760, 782], [763, 778], [765, 801], [768, 790], [772, 790], [776, 770], [779, 765], [781, 765], [783, 775], [785, 778], [788, 772], [791, 775], [794, 801]], color: '#008000', width: 2},
  {points: [[752, 801], [786, 765], [790, 770], [796, 801]], color: '#0000ff', width: 2}
]));

document.getElementById('charts').innerHTML = charts.map(drawChart).join('');
```
